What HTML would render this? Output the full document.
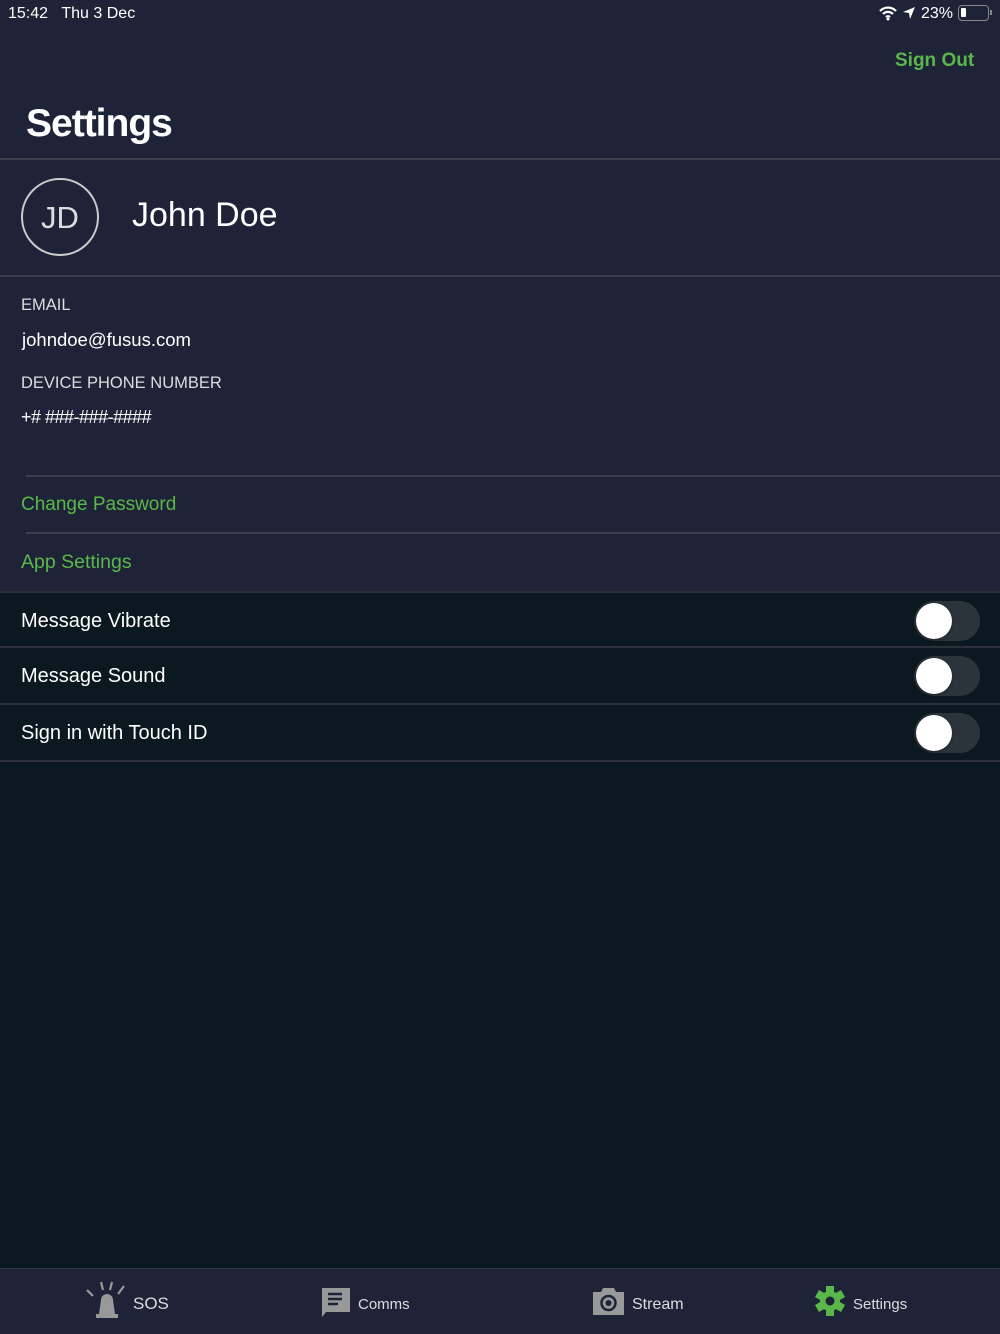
<!DOCTYPE html>
<html><head><meta charset="utf-8"><style>
*{margin:0;padding:0;box-sizing:border-box}
body{width:1000px;height:1334px;background:#0b1820;font-family:"Liberation Sans",sans-serif;color:#fff;position:relative;overflow:hidden}
.top{position:absolute;left:0;top:0;width:1000px;height:591px;background:#1f2337}
.abs{position:absolute;white-space:nowrap}
.line{position:absolute;height:2px;background:#3a3e4d}
.green{color:#5ab84a}
.row{position:absolute;left:0;width:1000px;height:57px;border-bottom:2px solid #2a3139}
.row span{position:absolute;left:21px;top:17px;font-size:20px}
.tog{position:absolute;left:914px;top:8px;width:66px;height:40px;border-radius:20px;background:#2c343b}
.tog::after{content:"";position:absolute;left:2px;top:2px;width:36px;height:36px;border-radius:50%;background:#fff;box-shadow:0 1px 3px rgba(0,0,0,.4)}
.tab{position:absolute;top:1268px;left:0;width:1000px;height:66px;background:#1f2337;border-top:1px solid #2b3a4a}
.tl{position:absolute;font-size:15px;color:#ddd}
</style></head><body>
<div class="top"></div>
<div class="abs" style="left:8px;top:5px;font-size:16px">15:42&nbsp;&nbsp;&nbsp;Thu 3 Dec</div>
<svg class="abs" style="left:878px;top:5px" width="20" height="16" viewBox="0 0 20 16"><path d="M2 6a11 11 0 0 1 16 0M5 9a7 7 0 0 1 10 0M8 12a3 3 0 0 1 4 0" stroke="#fff" stroke-width="2.2" fill="none"/><circle cx="10" cy="14" r="1.5" fill="#fff"/></svg>
<svg class="abs" style="left:902px;top:6px" width="14" height="14" viewBox="0 0 14 14"><path d="M13 1L1 6l6 1 1 6z" fill="#fff"/></svg>
<div class="abs" style="left:921px;top:5px;font-size:16px">23%</div>
<div class="abs" style="left:958px;top:5px;width:31px;height:16px;border:1.5px solid #888;border-radius:4px"><div style="position:absolute;left:2px;top:2px;width:5px;height:9px;background:#fff;border-radius:1px"></div></div>
<div class="abs" style="left:990px;top:10px;width:2px;height:5px;background:#888"></div>
<div class="abs green" style="left:895px;top:50px;font-size:19px;font-weight:bold">Sign Out</div>
<div class="abs" style="left:26px;top:102px;font-size:39px;font-weight:bold;letter-spacing:-1px">Settings</div>
<div class="line" style="left:0;top:158px;width:1000px"></div>
<div class="abs" style="left:21px;top:178px;width:78px;height:78px;border:2px solid #ccc;border-radius:50%;text-align:center;line-height:76px;font-size:31px;color:#ddd">JD</div>
<div class="abs" style="left:132px;top:196px;font-size:34px">John Doe</div>
<div class="line" style="left:0;top:275px;width:1000px"></div>
<div class="abs" style="left:21px;top:296px;font-size:16.5px;color:#ddd">EMAIL</div>
<div class="abs" style="left:22px;top:329px;font-size:18.5px">johndoe@fusus.com</div>
<div class="abs" style="left:21px;top:374px;font-size:16.5px;color:#ddd">DEVICE PHONE NUMBER</div>
<div class="abs" style="left:21px;top:407px;font-size:18px;letter-spacing:-0.5px">+# ###-###-####</div>
<div class="line" style="left:26px;top:475px;width:974px"></div>
<div class="abs green" style="left:21px;top:494px;font-size:19px">Change Password</div>
<div class="line" style="left:26px;top:532px;width:974px"></div>
<div class="abs green" style="left:21px;top:551px;font-size:19.5px">App Settings</div>
<div class="row" style="top:591px;border-top:2px solid #2a3139"><span>Message Vibrate</span><div class="tog"></div></div>
<div class="row" style="top:648px"><span>Message Sound</span><div class="tog"></div></div>
<div class="row" style="top:705px"><span>Sign in with Touch ID</span><div class="tog"></div></div>
<div class="tab">
<svg class="abs" style="left:84px;top:11px" width="46" height="40" viewBox="0 0 46 40"><g stroke="#999" stroke-width="2.2"><path d="M3 10l6 6M17 2l2 8M28 2l-2 8M40 6l-6 8"/></g><path d="M15 34l2-14a6 6 0 0 1 12 0l2 14z" fill="#999"/><rect x="12" y="34" width="22" height="4" fill="#999"/></svg>
<div class="tl" style="left:133px;top:25px;font-size:17px">SOS</div>
<svg class="abs" style="left:320px;top:17px" width="31" height="32" viewBox="0 0 31 32"><path d="M2 2h28v24H6l-4 5z" fill="#999"/><g stroke="#1f2337" stroke-width="2.4"><path d="M8 8h14M8 13h14M8 18h10"/></g></svg>
<div class="tl" style="left:358px;top:27px">Comms</div>
<svg class="abs" style="left:592px;top:17px" width="33" height="30" viewBox="0 0 33 30"><path d="M1 6h8l2-4h11l2 4h8v23H1z" fill="#999"/><circle cx="16.5" cy="17" r="7" fill="none" stroke="#1f2337" stroke-width="2.5"/><circle cx="16.5" cy="17" r="3" fill="#1f2337"/></svg>
<div class="tl" style="left:632px;top:27px;font-size:16px">Stream</div>
<svg class="abs" style="left:815px;top:17px" width="30" height="30" viewBox="0 0 30 30"><g fill="#5ab84a"><circle cx="15" cy="15" r="10"/><rect x="11" y="0" width="8" height="30"/><rect x="11" y="0" width="8" height="30" transform="rotate(60 15 15)"/><rect x="11" y="0" width="8" height="30" transform="rotate(120 15 15)"/></g><circle cx="15" cy="15" r="4.5" fill="#1f2337"/></svg>
<div class="tl green" style="left:853px;top:27px">Settings</div>
</div>
</body></html>
